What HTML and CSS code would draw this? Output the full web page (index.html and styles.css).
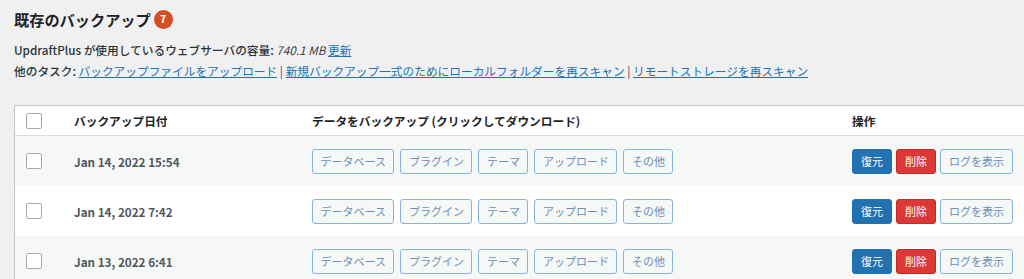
FILE: index.html
```html
<!DOCTYPE html>
<html lang="ja">
<head>
<meta charset="utf-8">
<link rel="stylesheet" href="styles.css">
</head>
<body>
<div class="wrap">
  <h2 class="title">既存のバックアップ <span class="badge">7</span></h2>
  <p class="info"><strong>UpdraftPlus が使用しているウェブサーバの容量:</strong> <em>740.1 MB</em> <a href="#">更新</a></p>
  <p class="info"><strong>他のタスク:</strong> <a href="#">バックアップファイルをアップロード</a> | <a href="#">新規バックアップ一式のためにローカルフォルダーを再スキャン</a> | <a href="#">リモートストレージを再スキャン</a></p>

  <div class="table">
    <div class="row head">
      <div class="cell cb"><span class="check"></span></div>
      <div class="cell">バックアップ日付</div>
      <div class="cell">データをバックアップ (クリックしてダウンロード)</div>
      <div class="cell">操作</div>
    </div>
    <div class="row alt">
      <div class="cell cb"><span class="check"></span></div>
      <div class="cell date">Jan 14, 2022 15:54</div>
      <div class="cell btns">
        <span class="btn">データベース</span><span class="btn">プラグイン</span><span class="btn">テーマ</span><span class="btn">アップロード</span><span class="btn">その他</span>
      </div>
      <div class="cell actions">
        <span class="btn primary">復元</span><span class="btn danger">削除</span><span class="btn log">ログを表示</span>
      </div>
    </div>
    <div class="row">
      <div class="cell cb"><span class="check"></span></div>
      <div class="cell date">Jan 14, 2022 7:42</div>
      <div class="cell btns">
        <span class="btn">データベース</span><span class="btn">プラグイン</span><span class="btn">テーマ</span><span class="btn">アップロード</span><span class="btn">その他</span>
      </div>
      <div class="cell actions">
        <span class="btn primary">復元</span><span class="btn danger">削除</span><span class="btn log">ログを表示</span>
      </div>
    </div>
    <div class="row alt">
      <div class="cell cb"><span class="check"></span></div>
      <div class="cell date">Jan 13, 2022 6:41</div>
      <div class="cell btns">
        <span class="btn">データベース</span><span class="btn">プラグイン</span><span class="btn">テーマ</span><span class="btn">アップロード</span><span class="btn">その他</span>
      </div>
      <div class="cell actions">
        <span class="btn primary">復元</span><span class="btn danger">削除</span><span class="btn log">ログを表示</span>
      </div>
    </div>
  </div>
</div>
</body>
</html>
```

FILE: styles.css
```css
html, body {
  margin: 0;
  padding: 0;
  background: #f0f0f1;
  overflow: hidden;
}
body {
  font-family: "Noto Sans CJK JP", "Noto Sans", sans-serif;
  font-size: 11.7px;
  color: #3c434a;
}
.wrap {
  padding: 6px 0 0 14px;
}
.title {
  margin: 0;
  font-size: 15.2px;
  font-weight: 700;
  color: #1d2327;
  line-height: 26px;
  display: flex;
  align-items: center;
}
.badge {
  display: inline-flex;
  align-items: center;
  justify-content: center;
  width: 19px;
  height: 19px;
  margin-left: 3px;
  border-radius: 50%;
  background: #d54e21;
  color: #fff;
  font-size: 10.5px;
  font-weight: 700;
}
.info {
  margin: 0;
  line-height: 21px;
}
.info:first-of-type {
  margin-top: 7px;
}
.info strong {
  font-weight: 500;
  color: #2c3338;
}
.info em {
  font-style: italic;
}
.info a {
  color: #2271b1;
  text-decoration: underline;
}
.table {
  margin-top: 24px;
  width: 1040px;
  border: 1px solid #c3c4c7;
  border-right: none;
  background: #fff;
}
.row {
  display: grid;
  grid-template-columns: 59px 238px 540px 1fr;
  align-items: center;
  height: 50px;
  background: #fff;
}
.row.alt {
  background: #f6f7f7;
}
.row.head {
  height: 29px;
  border-bottom: 1px solid #dcdcde;
  font-weight: 700;
  color: #1d2327;
}
.cell {
  white-space: nowrap;
}
.cb {
  padding-left: 11px;
  display: flex;
  align-items: center;
}
.check {
  width: 14px;
  height: 14px;
  border: 1px solid #a7aaad;
  border-radius: 2px;
  background: #fff;
}
.date {
  font-weight: 700;
  color: #50575e;
}
.btns, .actions {
  display: flex;
  align-items: center;
}
.btns {
  gap: 6px;
}
.actions {
  gap: 4px;
}
.btn {
  display: inline-flex;
  align-items: center;
  justify-content: center;
  box-sizing: border-box;
  height: 25px;
  padding: 0 7.5px;
  border: 1px solid #86b3e0;
  border-radius: 3px;
  background: #f6f7f7;
  color: #6c8fb8;
  font-size: 11px;
}
.btn.primary {
  background: #2271b1;
  border-color: #2271b1;
  color: #fff;
  width: 40px;
  padding: 0;
}
.btn.danger {
  background: #dc3838;
  border-color: #c42a2a;
  color: #fff;
  width: 40px;
  padding: 0;
}
.btn.log {
  width: 73px;
  padding: 0;
}
```
